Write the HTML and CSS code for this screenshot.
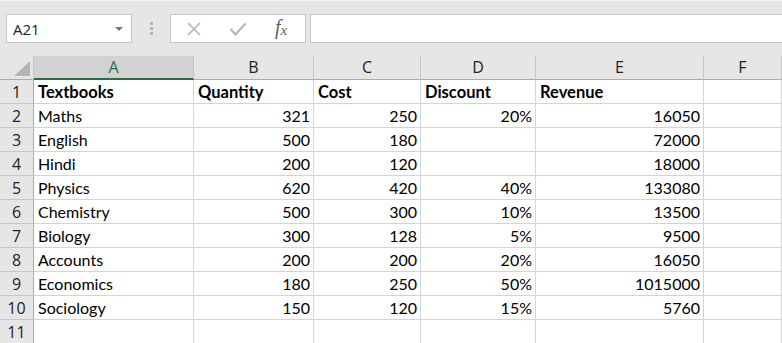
FILE: index.html
```html
<!DOCTYPE html>
<html lang="en">
<head>
  <meta charset="UTF-8">
  <title>Textbooks - Excel</title>
  <link rel="stylesheet" href="styles.css">
</head>
<body>
  <div class="formula-area">
    <div class="name-box">
      <span>A21</span>
      <span class="name-arrow"></span>
    </div>
    <div class="grip">
      <span></span><span></span><span></span>
    </div>
    <div class="fx-buttons">
      <svg class="fx-icon" width="16" height="16" viewBox="0 0 16 16">
        <path d="M2 2 L14 14 M14 2 L2 14" stroke="#b3b3b3" stroke-width="1.6" fill="none"/>
      </svg>
      <svg class="fx-icon" width="18" height="16" viewBox="0 0 18 16">
        <path d="M1.5 8 L6.5 13.5 L16.5 2.5" stroke="#b3b3b3" stroke-width="2" fill="none"/>
      </svg>
      <span class="fx-label">f<sub>x</sub></span>
    </div>
    <div class="formula-input"></div>
  </div>

  <div class="sheet">
    <div class="corner"><span class="corner-tri"></span></div>
    <div class="col-head active">A</div>
    <div class="col-head">B</div>
    <div class="col-head">C</div>
    <div class="col-head">D</div>
    <div class="col-head">E</div>
    <div class="col-head">F</div>

    <div class="row-head">1</div>
    <div class="cell bold">Textbooks</div>
    <div class="cell bold">Quantity</div>
    <div class="cell bold">Cost</div>
    <div class="cell bold">Discount</div>
    <div class="cell bold">Revenue</div>
    <div class="cell"></div>

    <div class="row-head">2</div>
    <div class="cell">Maths</div>
    <div class="cell num">321</div>
    <div class="cell num">250</div>
    <div class="cell num">20%</div>
    <div class="cell num">16050</div>
    <div class="cell"></div>

    <div class="row-head">3</div>
    <div class="cell">English</div>
    <div class="cell num">500</div>
    <div class="cell num">180</div>
    <div class="cell num"></div>
    <div class="cell num">72000</div>
    <div class="cell"></div>

    <div class="row-head">4</div>
    <div class="cell">Hindi</div>
    <div class="cell num">200</div>
    <div class="cell num">120</div>
    <div class="cell num"></div>
    <div class="cell num">18000</div>
    <div class="cell"></div>

    <div class="row-head">5</div>
    <div class="cell">Physics</div>
    <div class="cell num">620</div>
    <div class="cell num">420</div>
    <div class="cell num">40%</div>
    <div class="cell num">133080</div>
    <div class="cell"></div>

    <div class="row-head">6</div>
    <div class="cell">Chemistry</div>
    <div class="cell num">500</div>
    <div class="cell num">300</div>
    <div class="cell num">10%</div>
    <div class="cell num">13500</div>
    <div class="cell"></div>

    <div class="row-head">7</div>
    <div class="cell">Biology</div>
    <div class="cell num">300</div>
    <div class="cell num">128</div>
    <div class="cell num">5%</div>
    <div class="cell num">9500</div>
    <div class="cell"></div>

    <div class="row-head">8</div>
    <div class="cell">Accounts</div>
    <div class="cell num">200</div>
    <div class="cell num">200</div>
    <div class="cell num">20%</div>
    <div class="cell num">16050</div>
    <div class="cell"></div>

    <div class="row-head">9</div>
    <div class="cell">Economics</div>
    <div class="cell num">180</div>
    <div class="cell num">250</div>
    <div class="cell num">50%</div>
    <div class="cell num">1015000</div>
    <div class="cell"></div>

    <div class="row-head">10</div>
    <div class="cell">Sociology</div>
    <div class="cell num">150</div>
    <div class="cell num">120</div>
    <div class="cell num">15%</div>
    <div class="cell num">5760</div>
    <div class="cell"></div>

    <div class="row-head">11</div>
    <div class="cell"></div>
    <div class="cell"></div>
    <div class="cell"></div>
    <div class="cell"></div>
    <div class="cell"></div>
    <div class="cell"></div>
  </div>
</body>
</html>
```

FILE: styles.css
```css
* {
  margin: 0;
  padding: 0;
  box-sizing: border-box;
}

body {
  width: 782px;
  height: 343px;
  overflow: hidden;
  background: #e6e6e6;
  font-family: 'Lato', 'Open Sans', sans-serif;
  color: #000;
}

/* Formula bar row */
.formula-area {
  height: 56px;
  border-top: 1px solid #f4f4f4;
  padding: 13px 0 0 6px;
  display: flex;
  align-items: flex-start;
}

.name-box {
  width: 126px;
  height: 29px;
  background: #fff;
  border: 1px solid #c6c6c6;
  display: flex;
  align-items: center;
  justify-content: space-between;
  padding: 0 8px 0 6px;
  font-family: 'Open Sans', sans-serif;
  font-size: 15px;
  color: #222;
}

.name-arrow {
  width: 0;
  height: 0;
  border-left: 4px solid transparent;
  border-right: 4px solid transparent;
  border-top: 4px solid #777;
  margin-top: 1px;
}

.grip {
  width: 38px;
  height: 29px;
  display: flex;
  flex-direction: column;
  align-items: center;
  justify-content: center;
  gap: 2px;
}

.grip span {
  width: 3px;
  height: 3px;
  background: #b5b5b5;
}

.fx-buttons {
  width: 136px;
  height: 29px;
  background: #fff;
  border: 1px solid #c6c6c6;
  display: flex;
  align-items: center;
  padding-left: 15px;
  gap: 27px;
}

.fx-label {
  font-family: 'Liberation Serif', serif;
  font-style: italic;
  font-size: 20px;
  color: #5f5f5f;
  margin-left: 1px;
  margin-top: -2px;
}

.fx-label sub {
  font-size: 15px;
  vertical-align: -1px;
}

.formula-input {
  flex: 1;
  height: 29px;
  margin-left: 4px;
  background: #fff;
  border: 1px solid #c6c6c6;
  border-right: none;
}

/* Grid */
.sheet {
  display: grid;
  grid-template-columns: 34px 160px 120px 107px 115px 168px 1fr;
  grid-template-rows: 24px repeat(11, 24px);
  background: #fff;
}

.corner {
  background: #e6e6e6;
  border-right: 1px solid #c6c6c6;
  border-bottom: 1px solid #ababab;
  position: relative;
}

.corner-tri {
  position: absolute;
  right: 3px;
  bottom: 3px;
  width: 0;
  height: 0;
  border-left: 16px solid transparent;
  border-bottom: 15px solid #b4b4b4;
}

.col-head {
  background: #e6e6e6;
  border-right: 1px solid #c6c6c6;
  border-bottom: 1px solid #ababab;
  text-align: center;
  font-family: 'Open Sans', sans-serif;
  font-size: 16px;
  line-height: 23px;
  color: #222;
}

.col-head.active {
  background: #d2d2d2;
  color: #217346;
  border-bottom: 2px solid #217346;
}

.row-head {
  background: #e6e6e6;
  border-right: 1px solid #ababab;
  border-bottom: 1px solid #c6c6c6;
  text-align: center;
  font-family: 'Open Sans', sans-serif;
  font-size: 16px;
  line-height: 24px;
  color: #222;
}

.cell {
  border-right: 1px solid #d4d4d4;
  border-bottom: 1px solid #d4d4d4;
  padding: 0 3px 0 4px;
  font-size: 16px;
  line-height: 24px;
  white-space: nowrap;
  overflow: hidden;
}

.cell.bold {
  font-weight: 700;
  font-size: 16.5px;
}

.cell.num {
  text-align: right;
}
```
